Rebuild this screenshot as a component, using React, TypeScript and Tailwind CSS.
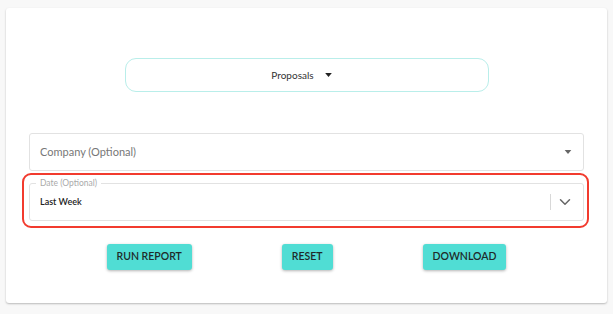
import { ChevronDown } from 'lucide-react';

function Caret({ className }: { className?: string }) {
  return (
    <svg viewBox="0 0 10 6" className={className} fill="currentColor">
      <path d="M0 0h10L5 6z" />
    </svg>
  );
}

export default function App() {
  return (
    <div className="min-h-[314px] bg-[#f8f8f8] pl-[6px] pr-[6px] pt-[8px] font-['Lato',sans-serif]">
      <div className="h-[295px] rounded-[3px] bg-white px-[23px] pt-[50px] shadow-[0_1px_2px_rgba(0,0,0,0.25)]">
        {/* Report type */}
        <div className="mx-auto flex h-[34px] w-[364px] items-center justify-center gap-[11px] rounded-[11px] border border-[#b9eeea] pr-[10px] text-[10px] text-[#333]">
          <span>Proposals</span>
          <Caret className="h-[4px] w-[7px] text-[#222]" />
        </div>

        {/* Company */}
        <div className="mt-[41px] flex h-[38px] items-center justify-between rounded-[3px] border border-[#e2e2e2] pl-[10px] pr-[11px]">
          <span className="text-[11px] text-[#777]">Company (Optional)</span>
          <Caret className="h-[4px] w-[8px] text-[#666]" />
        </div>

        {/* Date, highlighted */}
        <div className="-ml-[7px] -mr-[5px] mt-[2px] rounded-[9px] border-2 border-[#f23b2e] pb-[5px] pl-[5px] pr-[3px] pt-[8px]">
          <div className="relative flex h-[38px] items-center rounded-[3px] border border-[#e2e2e2] pl-[10px] pr-[9px]">
            <span className="absolute -top-[7px] left-[6px] bg-white px-[4px] text-[8.5px] leading-[12px] text-[#aaa]">
              Date (Optional)
            </span>
            <span className="flex-1 text-[9px] font-semibold text-[#222]">Last Week</span>
            <div className="h-[16px] w-px bg-[#d8d8d8]" />
            <ChevronDown className="ml-[5px] h-[18px] w-[18px] text-[#666]" strokeWidth={2} />
          </div>
        </div>

        {/* Actions */}
        <div className="mt-[16px] flex justify-center gap-[90px]">
          {['RUN REPORT', 'RESET', 'DOWNLOAD'].map((label) => (
            <button
              key={label}
              className="h-[26px] rounded-[3px] bg-[#50ddd4] px-[10px] text-[10.5px] font-semibold text-[#1f2a2a] shadow-[0_1px_3px_rgba(0,0,0,0.3)]"
            >
              {label}
            </button>
          ))}
        </div>
      </div>
    </div>
  );
}
